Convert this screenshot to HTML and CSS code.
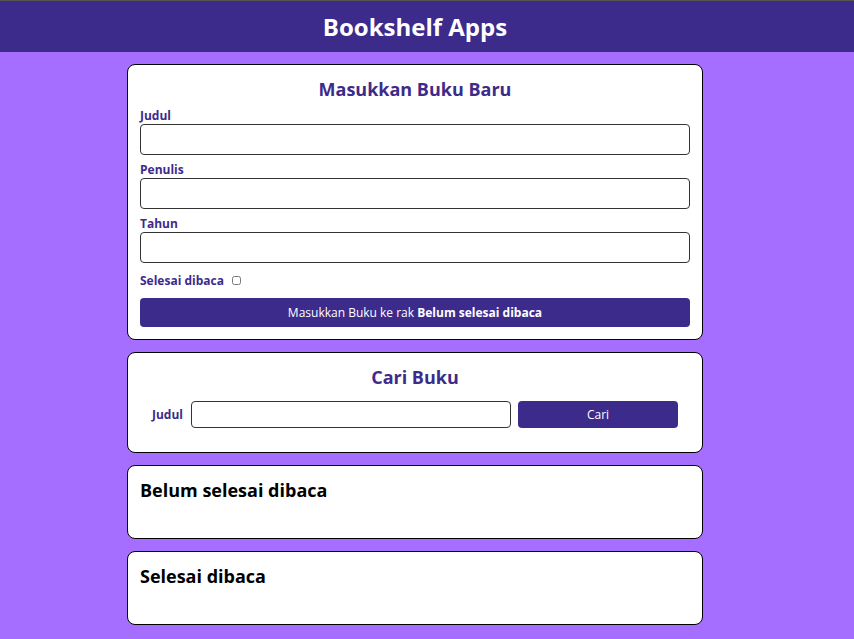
FILE: index.html
```html
<!DOCTYPE html>
<html lang="id">
<head>
<meta charset="utf-8">
<title>Bookshelf Apps</title>
<link rel="stylesheet" href="styles.css">
</head>
<body>
<header class="head">
  <h1 class="head-title">Bookshelf Apps</h1>
</header>
<main class="main">
  <section class="card input-section">
    <h2 class="card-title">Masukkan Buku Baru</h2>
    <form class="book-form">
      <div class="field">
        <label class="label" for="title">Judul</label>
        <input class="text-input" id="title" type="text">
      </div>
      <div class="field">
        <label class="label" for="author">Penulis</label>
        <input class="text-input" id="author" type="text">
      </div>
      <div class="field">
        <label class="label" for="year">Tahun</label>
        <input class="text-input" id="year" type="text">
      </div>
      <div class="check-row">
        <label class="label" for="complete">Selesai dibaca</label>
        <input class="check" id="complete" type="checkbox">
      </div>
      <button class="btn btn-submit" type="button">Masukkan Buku ke rak <b>Belum selesai dibaca</b></button>
    </form>
  </section>
  <section class="card search-section">
    <h2 class="card-title">Cari Buku</h2>
    <form class="search-form">
      <label class="label" for="search">Judul</label>
      <input class="search-input" id="search" type="text">
      <button class="btn btn-search" type="button">Cari</button>
    </form>
  </section>
  <section class="card shelf">
    <h2 class="shelf-title">Belum selesai dibaca</h2>
  </section>
  <section class="card shelf">
    <h2 class="shelf-title">Selesai dibaca</h2>
  </section>
</main>
</body>
</html>
```
FILE: styles.css
```css
* { box-sizing: border-box; }
html, body { margin: 0; padding: 0; }
body {
  font-family: "Open Sans", sans-serif;
  background: #a66eff;
  border-top: 1px solid #555;
  min-height: 100vh;
}
.head {
  background: #3d2b8b;
  height: 51px;
  display: flex;
  align-items: center;
  justify-content: center;
  padding-right: 24px;
}
.head-title {
  margin: 0;
  color: #fff;
  font-size: 24px;
  font-weight: 700;
  line-height: 1;
}
.main {
  width: 576px;
  margin-left: 127px;
  padding-top: 12px;
  display: flex;
  flex-direction: column;
  gap: 12px;
}
.card {
  background: #fff;
  border: 1px solid #000;
  border-radius: 8px;
  padding: 12px;
}
.card-title {
  margin: 0;
  text-align: center;
  color: #3d2b8b;
  font-size: 18px;
  font-weight: 700;
  line-height: 24px;
}
.book-form {
  display: flex;
  flex-direction: column;
  margin-top: 6px;
}
.field { display: flex; flex-direction: column; }
.label {
  color: #3d2b8b;
  font-size: 12px;
  font-weight: 700;
  line-height: 17px;
}
.text-input {
  height: 31px;
  border: 1px solid #333;
  border-radius: 4px;
  margin: 0 0 6px;
  font-family: inherit;
}
.check-row {
  display: flex;
  align-items: center;
  gap: 8px;
  height: 20px;
  margin-top: 1px;
}
.check { margin: 0; width: 9px; height: 9px; }
.btn {
  background: #3d2b8b;
  color: #fff;
  border: none;
  border-radius: 4px;
  font-family: inherit;
  font-size: 12px;
}
.btn-submit {
  height: 29px;
  margin-top: 8px;
}
.search-form {
  display: flex;
  align-items: center;
  padding: 0 12px;
  margin: 12px 0 12px;
}
.search-form .label { margin-right: 8px; }
.search-input {
  width: 320px;
  height: 27px;
  border: 1px solid #333;
  border-radius: 4px;
  margin-right: 7px;
  font-family: inherit;
}
.btn-search { flex: 1; height: 27px; }
.shelf { height: 74px; }
.shelf-title {
  margin: 0;
  font-size: 18px;
  font-weight: 700;
  color: #000;
  line-height: 24px;
}
```
